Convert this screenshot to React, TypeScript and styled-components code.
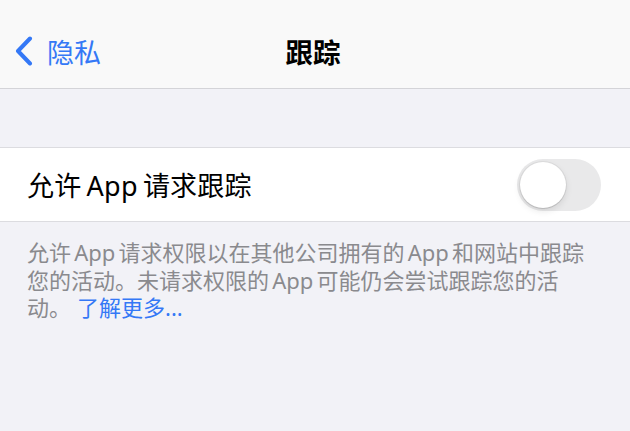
import React, { useState } from 'react';
import styled, { createGlobalStyle } from 'styled-components';

const GlobalStyle = createGlobalStyle`
  html, body {
    margin: 0;
    padding: 0;
    background: #f2f2f7;
  }
  body {
    font-family: "Noto Sans", "Noto Sans CJK SC", sans-serif;
    -webkit-font-smoothing: antialiased;
  }
`;

const Screen = styled.div`
  width: 630px;
  height: 431px;
  background: #f2f2f7;
  overflow: hidden;
`;

const NavBar = styled.header`
  height: 89px;
  padding-top: 14px;
  box-sizing: border-box;
  display: grid;
  grid-template-columns: 1fr auto 1fr;
  align-items: center;
  background: #f9f9f9;
  border-bottom: 1px solid #d4d4d8;
`;

const BackButton = styled.button`
  justify-self: start;
  display: flex;
  align-items: center;
  gap: 13px;
  padding: 0 0 0 14px;
  border: none;
  background: none;
  color: #3478f6;
  font-family: inherit;
  font-size: 27px;
  cursor: pointer;
`;

const NavTitle = styled.h1`
  margin: 0 0 0 -4px;
  font-size: 27.5px;
  font-weight: 700;
  color: #000;
`;

const Group = styled.section`
  margin-top: 58px;
  background: #fff;
  border-top: 1px solid #dcdce0;
  border-bottom: 1px solid #dcdce0;
`;

const Row = styled.div`
  height: 73px;
  display: flex;
  align-items: center;
  justify-content: space-between;
  padding: 0 29px 0 27px;
`;

const RowLabel = styled.span`
  font-size: 27px;
  color: #000;
  letter-spacing: 0.2px;
  word-spacing: -2px;
`;

const Track = styled.button<{ $on: boolean }>`
  position: relative;
  width: 84px;
  height: 52px;
  border: none;
  border-radius: 26px;
  padding: 0;
  background: ${(p) => (p.$on ? '#34c759' : '#e9e9ea')};
  cursor: pointer;
  transition: background 0.2s;
`;

const Knob = styled.span<{ $on: boolean }>`
  position: absolute;
  top: 3px;
  left: ${(p) => (p.$on ? '35px' : '3px')};
  width: 46px;
  height: 46px;
  border-radius: 50%;
  background: #fff;
  box-shadow: 0 3px 7px rgba(0, 0, 0, 0.1), 0 1px 1px rgba(0, 0, 0, 0.1),
    0 0 0 1px rgba(0, 0, 0, 0.05);
  transition: left 0.2s;
`;

const Footer = styled.p`
  margin: 0;
  padding: 17px 36px 0 27px;
  font-size: 22px;
  line-height: 27.5px;
  word-spacing: -2.5px;
  color: #8a8a8e;
`;

const Link = styled.a`
  color: #3478f6;
  text-decoration: none;
  word-spacing: normal;
  margin-left: 6px;
`;

function Chevron() {
  return (
    <svg width="20" height="30" viewBox="0 0 20 30" fill="none">
      <path
        d="M16 2.5 L4 15 L16 27.5"
        stroke="#3478f6"
        strokeWidth="4"
        strokeLinecap="round"
        strokeLinejoin="round"
      />
    </svg>
  );
}

export default function App() {
  const [allowTracking, setAllowTracking] = useState(false);

  return (
    <Screen>
      <GlobalStyle />
      <NavBar>
        <BackButton>
          <Chevron />
          隐私
        </BackButton>
        <NavTitle>跟踪</NavTitle>
        <span />
      </NavBar>
      <Group>
        <Row>
          <RowLabel>允许 App 请求跟踪</RowLabel>
          <Track $on={allowTracking} onClick={() => setAllowTracking(!allowTracking)}>
            <Knob $on={allowTracking} />
          </Track>
        </Row>
      </Group>
      <Footer>
        允许 App 请求权限以在其他公司拥有的 App 和网站中跟踪您的活动。未请求权限的 App 可能仍会尝试跟踪您的活动。
        <Link href="#">了解更多...</Link>
      </Footer>
    </Screen>
  );
}
